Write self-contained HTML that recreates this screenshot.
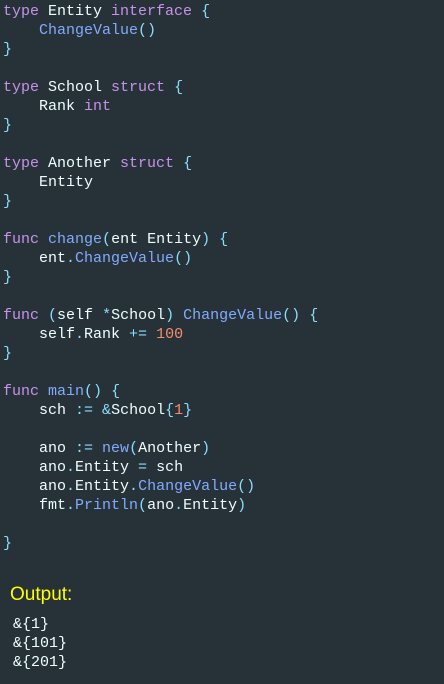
<!DOCTYPE html>
<html><head><style>
body{margin:0;background:#263238;width:444px;height:684px;overflow:hidden}
pre{margin:0;padding:2px 0 0 3px;font:15px/19px "Liberation Mono",monospace;color:#eeffff}
.k{color:#c792ea}.p{color:#89ddff}.f{color:#82aaff}.n{color:#f78c6c}
.out{position:absolute;left:10px;top:584px;color:#ffff00;font:19px "Liberation Sans",sans-serif}
.res{position:absolute;left:13px;top:615px;margin:0;padding:0;font:15px/19px "Liberation Mono",monospace;color:#eeffff}
</style></head><body>
<pre><span class="k">type</span> Entity <span class="k">interface</span> <span class="p">{</span>
    <span class="f">ChangeValue</span><span class="p">()</span>
<span class="p">}</span>

<span class="k">type</span> School <span class="k">struct</span> <span class="p">{</span>
    Rank <span class="k">int</span>
<span class="p">}</span>

<span class="k">type</span> Another <span class="k">struct</span> <span class="p">{</span>
    Entity
<span class="p">}</span>

<span class="k">func</span> <span class="f">change</span><span class="p">(</span>ent Entity<span class="p">)</span> <span class="p">{</span>
    ent<span class="p">.</span><span class="f">ChangeValue</span><span class="p">()</span>
<span class="p">}</span>

<span class="k">func</span> <span class="p">(</span>self <span class="p">*</span>School<span class="p">)</span> <span class="f">ChangeValue</span><span class="p">()</span> <span class="p">{</span>
    self<span class="p">.</span>Rank <span class="p">+=</span> <span class="n">100</span>
<span class="p">}</span>

<span class="k">func</span> <span class="f">main</span><span class="p">()</span> <span class="p">{</span>
    sch <span class="p">:=</span> <span class="p">&amp;</span>School<span class="p">{</span><span class="n">1</span><span class="p">}</span>

    ano <span class="p">:=</span> <span class="f">new</span><span class="p">(</span>Another<span class="p">)</span>
    ano<span class="p">.</span>Entity <span class="p">=</span> sch
    ano<span class="p">.</span>Entity<span class="p">.</span><span class="f">ChangeValue</span><span class="p">()</span>
    fmt<span class="p">.</span><span class="f">Println</span><span class="p">(</span>ano<span class="p">.</span>Entity<span class="p">)</span>

<span class="p">}</span></pre>
<div class="out">Output:</div>
<pre class="res">&amp;{1}
&amp;{101}
&amp;{201}</pre>
</body></html>
